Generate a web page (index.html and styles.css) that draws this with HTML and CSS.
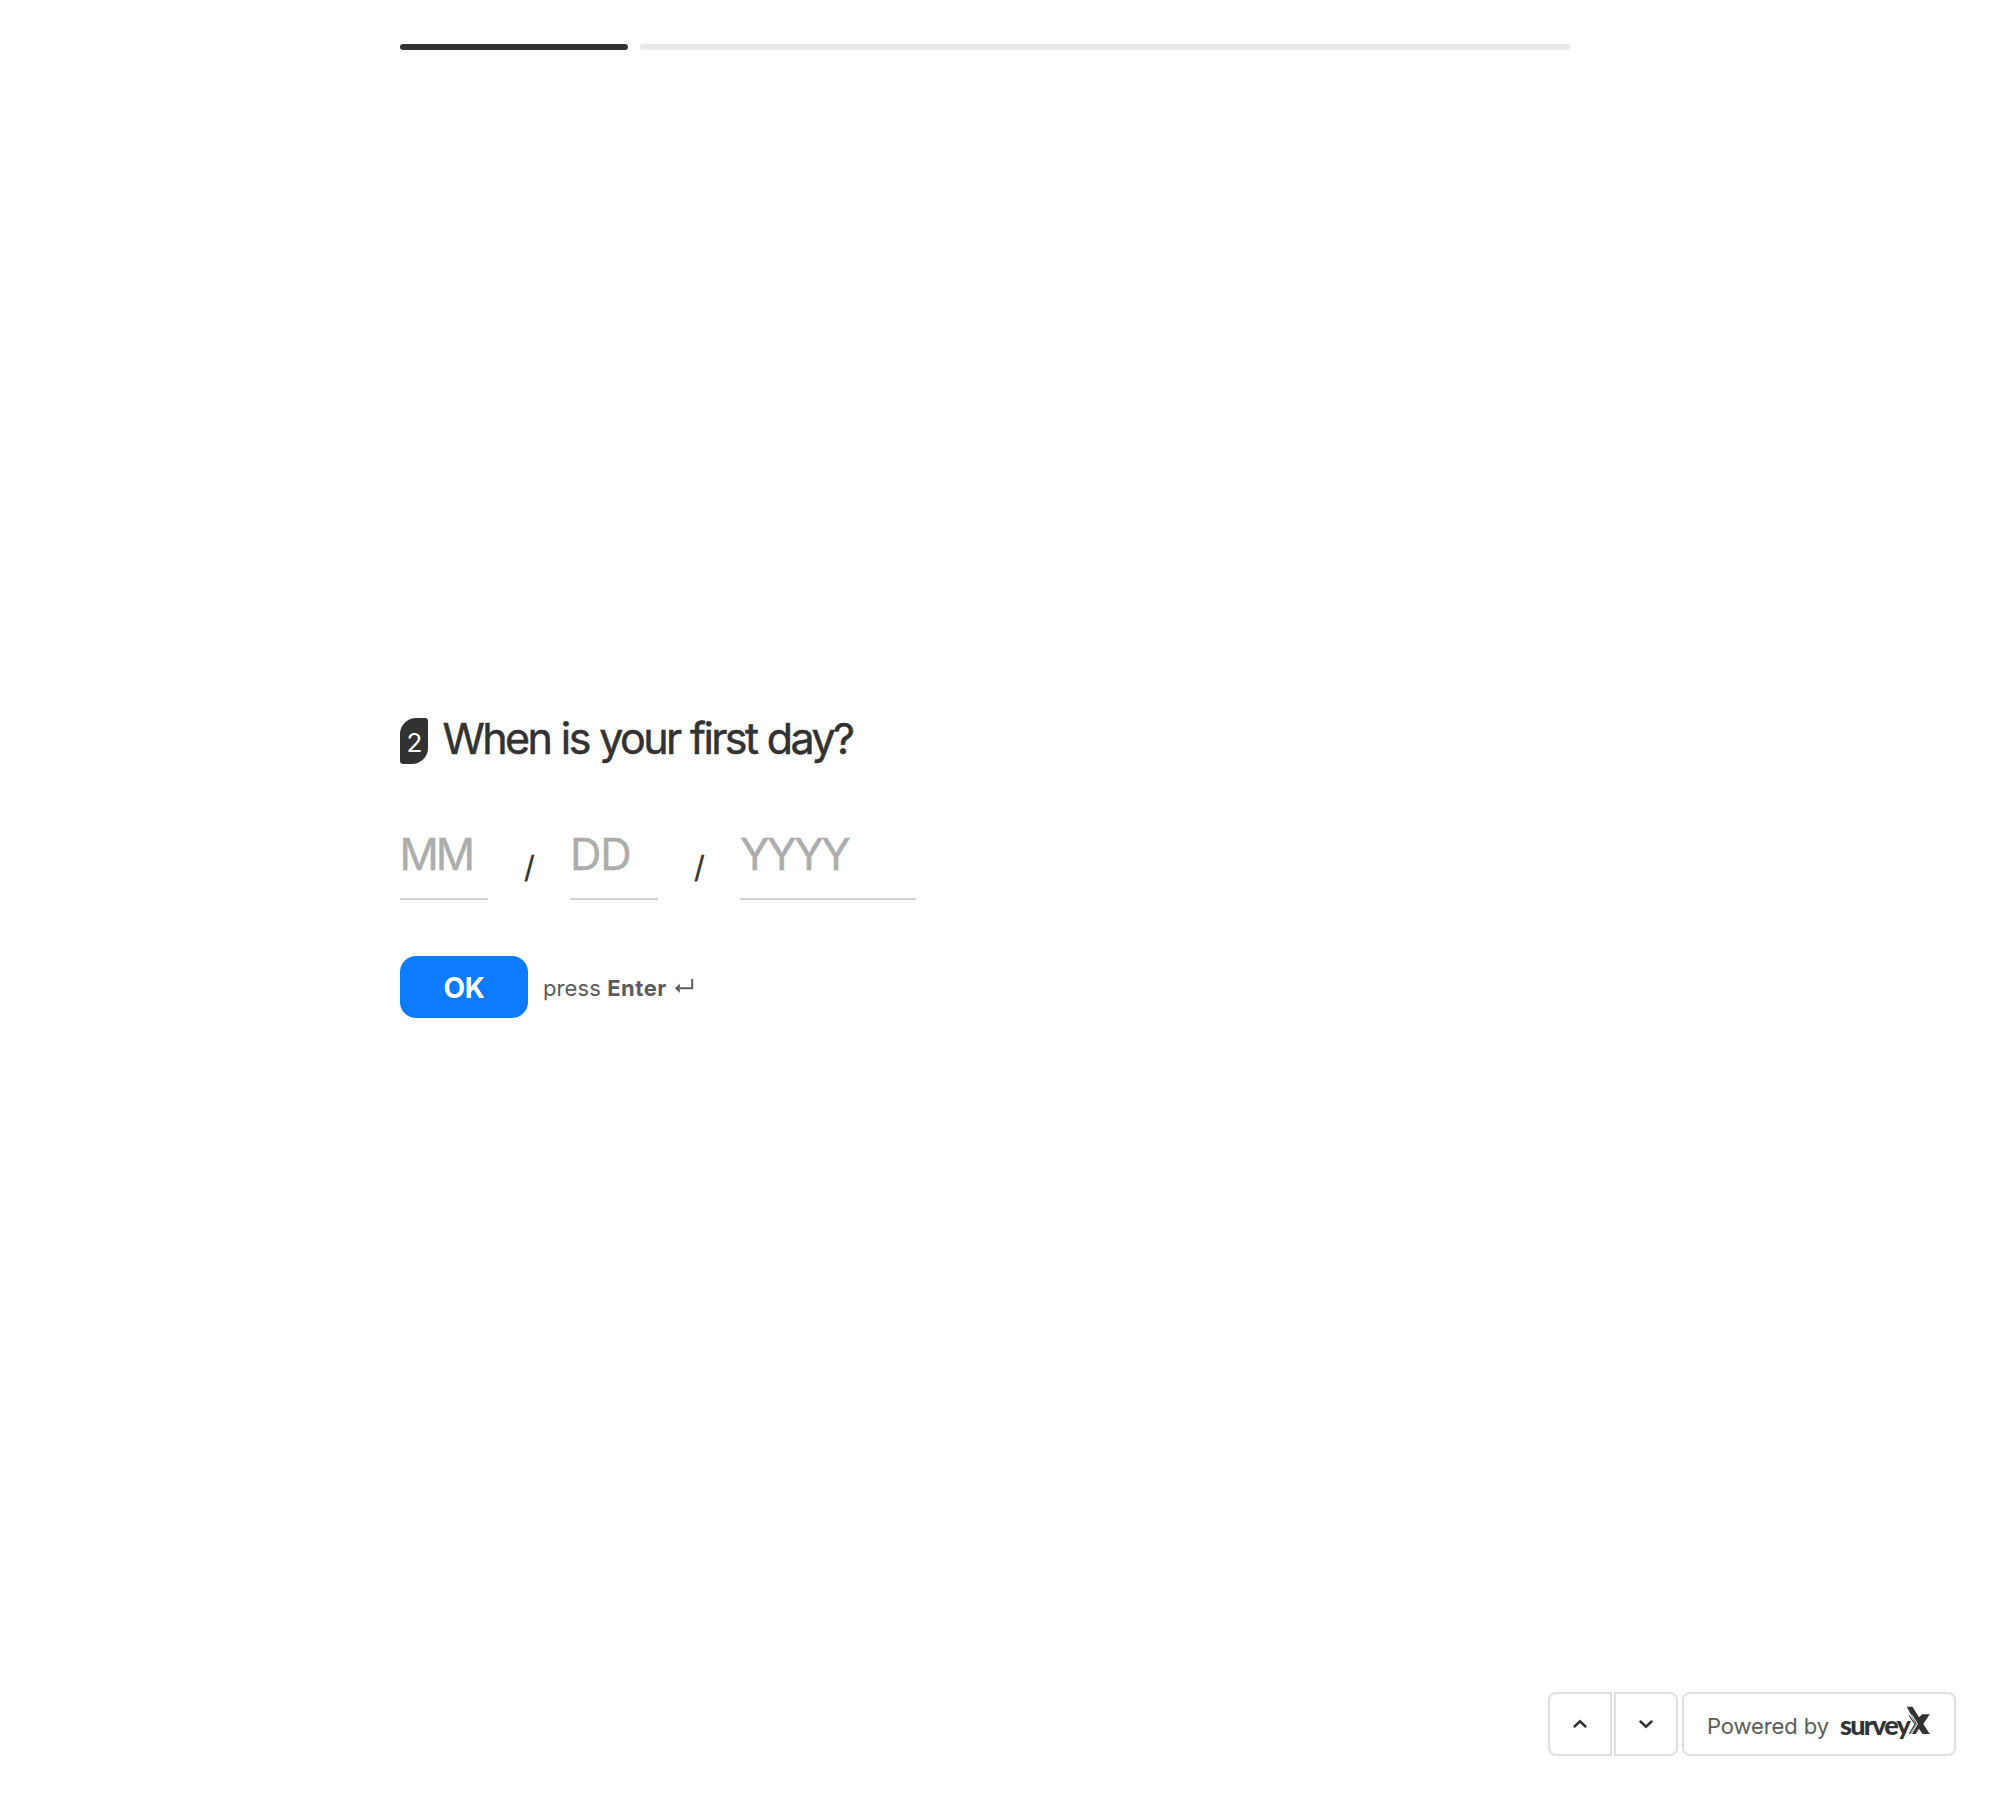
FILE: index.html
```html
<!DOCTYPE html>
<html lang="en">
<head>
<meta charset="utf-8">
<title>Survey</title>
<link rel="stylesheet" href="styles.css">
</head>
<body>
<div class="page">
  <header class="progress">
    <div class="progress-done"></div>
    <div class="progress-rest"></div>
  </header>
  <main class="question">
    <div class="heading">
      <span class="badge">2</span>
      <h1 class="title">When is your first day?</h1>
    </div>
    <div class="date">
      <span class="field field-month">MM</span>
      <span class="slash">/</span>
      <span class="field field-day">DD</span>
      <span class="slash">/</span>
      <span class="field field-year">YYYY</span>
    </div>
    <div class="actions">
      <button class="ok" type="button">OK</button>
      <span class="hint">press <b>Enter</b></span>
      <svg class="enter" width="20" height="16" viewBox="0 0 20 16"><path d="M17.200 1v9.300H5" fill="none" stroke="currentColor" stroke-width="1.900"/><path d="M0 10.300 4.800 5.600v9.400z" fill="currentColor"/></svg>
    </div>
  </main>
  <footer class="footer">
    <button class="nav nav-prev" type="button" aria-label="Previous"><svg width="16" height="10" viewBox="0 0 16 10"><path d="M2.500 7.500 8 2.300l5.500 5.200" fill="none" stroke="currentColor" stroke-width="2.500" stroke-linecap="round"/></svg></button>
    <button class="nav nav-next" type="button" aria-label="Next"><svg width="16" height="10" viewBox="0 0 16 10"><path d="M2.500 2.500 8 7.700l5.500-5.200" fill="none" stroke="currentColor" stroke-width="2.500" stroke-linecap="round"/></svg></button>
    <div class="powered">
      <span class="powered-text">Powered by</span>
      <span class="brand">survey</span>
      <svg class="brand-x" width="24" height="29" viewBox="0 0 24 29"><path d="M.8.7H6.500L13 11.300 16.200 8.300H23.800L17.300 18 23.800 28H16.500L13 22.800 9.700 28H4.500L10 18.500z" fill="currentColor"/><path d="M3.200 9.500 9 18.300 3.200 28" fill="none" stroke="currentColor" stroke-width="1.100"/><path d="M5.500 8.500 11.500 18 5.500 28" fill="none" stroke="#fff" stroke-width="1"/></svg>
    </div>
  </footer>
</div>
</body>
</html>
```
FILE: styles.css
```css
* { box-sizing: border-box; }
body { margin: 0; background: #fff; font-family: Inter, "Liberation Sans", sans-serif; color: #323232; }
.page { width: 2000px; height: 1800px; display: flex; flex-direction: column; padding: 44px 44px 44px 400px; }
.progress { display: flex; gap: 12px; width: 1170px; height: 6px; }
.progress-done { width: 228px; border-radius: 3px; background: #323232; }
.progress-rest { flex: 1; border-radius: 3px; background: #e9e9e9; }
.question { margin-top: 668px; flex: 1; }
.heading { display: flex; align-items: flex-start; gap: 14.5px; height: 46px; }
.badge { width: 28px; height: 46px; padding-left: 1px; line-height: 50px; border-radius: 16px 3px 16px 3px; background: #323232; color: #fff; font-size: 26px; text-align: center; }
.title { margin: 0; font-size: 43px; font-weight: 400; line-height: 41px; letter-spacing: -2.6px; word-spacing: 1px; white-space: nowrap; -webkit-text-stroke: .5px currentColor; }
.date { display: flex; margin-top: 56px; height: 80px; }
.field { width: 88px; height: 80px; border-bottom: 2px solid #d4d4d4; color: #adadad; font-size: 43.5px; line-height: 69px; -webkit-text-stroke: .4px currentColor; }
.field-month { letter-spacing: -3px; text-indent: -.5px; }
.field-day { letter-spacing: -1.2px; }
.field-year { width: 176px; letter-spacing: -2.4px; }
.slash { width: 82px; padding-left: 1px; line-height: 95px; font-size: 30px; text-align: center; -webkit-text-stroke: .3px currentColor; }
.actions { display: flex; align-items: center; height: 62px; margin-top: 56px; }
.ok { width: 128px; height: 62px; padding: 0; border: 0; border-radius: 16px; background: #0d7bff; color: #fff; font: 700 28px/64px Inter, sans-serif; letter-spacing: -0.4px; box-shadow: 0 3px 6px rgba(0, 0, 0, .03); }
.hint { margin-left: 15px; padding-top: 2px; font-size: 22px; line-height: 62px; letter-spacing: .1px; color: #5b5b5b; }
.hint b { font-weight: 700; letter-spacing: .5px; }
.enter { margin: 0 0 3px 8px; color: #5b5b5b; }
.footer { display: flex; justify-content: flex-end; height: 64px; }
.nav { width: 64px; height: 64px; padding: 0; display: flex; align-items: center; justify-content: center; border: 2px solid #e0e0e0; background: #fff; color: #323232; }
.nav-prev { border-radius: 8px 0 0 8px; margin-right: 2px; }
.nav-next { border-radius: 0 8px 8px 0; margin-right: 4px; }
.powered { display: flex; align-items: flex-start; width: 274px; height: 64px; border: 2px solid #e0e0e0; border-radius: 8px; padding-left: 23px; }
.powered-text { width: 133px; font-size: 22px; line-height: 64px; letter-spacing: -.1px; color: #5b5b5b; white-space: nowrap; }
.brand { width: 66px; font: 900 27px/61px Lato, sans-serif; letter-spacing: -1.8px; }
.brand-x { margin-top: 12px; }
```
